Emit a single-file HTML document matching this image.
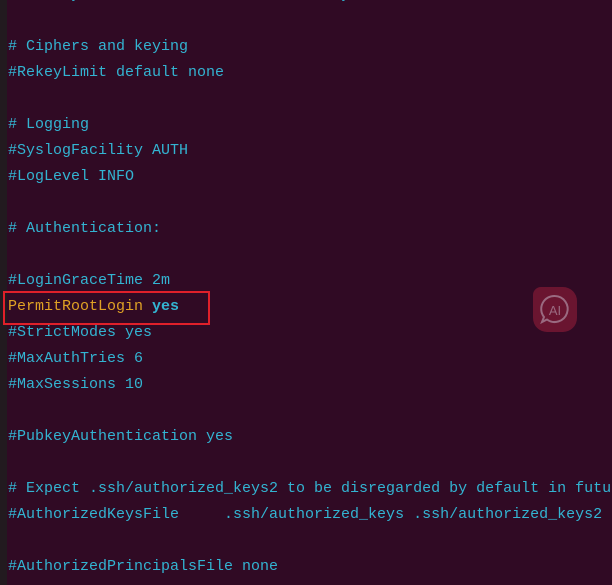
<!DOCTYPE html>
<html><head><style>
body{margin:0;width:612px;height:585px;background:#300a24;overflow:hidden;position:relative;font-family:"Liberation Mono",monospace;}
.strip{position:absolute;left:0;top:0;width:7px;height:585px;background:#221a1f;}
pre{position:absolute;left:8px;top:-18px;margin:0;font-family:"Liberation Mono",monospace;font-size:15px;line-height:26px;color:#33b4d2;white-space:pre;}
.o{color:#e0a224}
b{color:#33b4d2}
.box{position:absolute;left:3px;top:291px;width:203px;height:30px;border:2px solid #e0202a;box-sizing:content-box;}
.ai{position:absolute;left:533px;top:287px;width:44px;height:45px;background:#6a1530;border-radius:8px 14px 14px 14px;}
</style></head><body>
<div class="strip"></div>
<pre>#HostKey /etc/ssh/ssh_host_ed25519_key

# Ciphers and keying
#RekeyLimit default none

# Logging
#SyslogFacility AUTH
#LogLevel INFO

# Authentication:

#LoginGraceTime 2m
<span class="o">PermitRootLogin</span> <b>yes</b>
#StrictModes yes
#MaxAuthTries 6
#MaxSessions 10

#PubkeyAuthentication yes

# Expect .ssh/authorized_keys2 to be disregarded by default in future.
#AuthorizedKeysFile     .ssh/authorized_keys .ssh/authorized_keys2

#AuthorizedPrincipalsFile none</pre>
<div class="box"></div>
<div class="ai"><svg width="44" height="45" viewBox="0 0 44 45"><path d="M22 9a13 13 0 1 1-8 23.5L9 35l2-5A13 13 0 0 1 22 9z" fill="none" stroke="#9a6a80" stroke-width="2"/><text x="22" y="28" text-anchor="middle" font-family="Liberation Sans,sans-serif" font-size="13" fill="#9a6a80">AI</text></svg></div>
</body></html>
